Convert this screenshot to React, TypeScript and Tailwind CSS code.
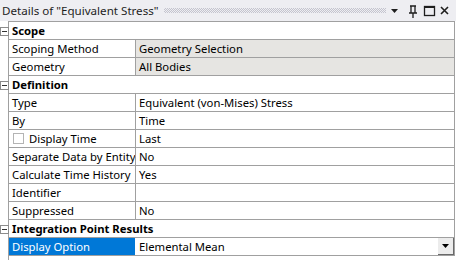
type Row =
  | { kind: "head"; label: string }
  | { kind: "item"; label: string; value: string; gray?: boolean; check?: boolean; selected?: boolean };

const rows: Row[] = [
  { kind: "head", label: "Scope" },
  { kind: "item", label: "Scoping Method", value: "Geometry Selection", gray: true },
  { kind: "item", label: "Geometry", value: "All Bodies", gray: true },
  { kind: "head", label: "Definition" },
  { kind: "item", label: "Type", value: "Equivalent (von-Mises) Stress" },
  { kind: "item", label: "By", value: "Time" },
  { kind: "item", label: "Display Time", value: "Last", check: true },
  { kind: "item", label: "Separate Data by Entity", value: "No" },
  { kind: "item", label: "Calculate Time History", value: "Yes" },
  { kind: "item", label: "Identifier", value: "" },
  { kind: "item", label: "Suppressed", value: "No" },
  { kind: "head", label: "Integration Point Results" },
  { kind: "item", label: "Display Option", value: "Elemental Mean", selected: true },
];

function Minus() {
  return (
    <div className="absolute left-0 top-[5px] flex h-[9px] w-[9px] items-center justify-center border border-[#8c8c8c] bg-white">
      <div className="h-px w-[5px] bg-[#333]" />
    </div>
  );
}

export default function App() {
  return (
    <div
      className="h-[260px] w-[456px] overflow-hidden bg-white text-[11.3px] leading-[17px] text-black"
      style={{ fontFamily: '"Noto Sans", sans-serif' }}
    >
      <div className="flex h-[21px] items-center bg-[#eeeef2] pl-[2px] pr-[6px] text-[11.6px] text-[#1e1e1e]">
        <span className="whitespace-nowrap">Details of "Equivalent Stress"</span>
        <div className="ml-[5px] mr-[4px] h-[5px] flex-1 bg-[conic-gradient(#c4c4ce_25%,transparent_0_50%,#c4c4ce_0_75%,transparent_0)] bg-[length:2px_2px]" />
        <svg width="60" height="14" viewBox="0 0 60 14" className="shrink-0">
          <path d="M1 5h7l-3.5 4z" fill="#1e1e1e" />
          <path d="M20 2h6M21 2v7M25 2v7M19 9h8M23 9v5" stroke="#1e1e1e" strokeWidth="1.3" fill="none" />
          <rect x="34.5" y="2.5" width="10" height="9" stroke="#1e1e1e" strokeWidth="1.3" fill="none" />
          <rect x="34.5" y="2.5" width="10" height="1.5" fill="#1e1e1e" />
          <path d="M51 3l7 7M58 3l-7 7" stroke="#1e1e1e" strokeWidth="1.6" />
        </svg>
      </div>
      <div className="relative">
        <div className="absolute left-[8px] top-0 h-[240px] w-px bg-[#a0a0a0]" />
        <div className="ml-[8px] mr-[1px] border-t border-r border-[#a0a0a0]">
          {rows.map((r, i) => {
            if (r.kind === "head") {
              return (
                <div key={i} className="relative -ml-[8px]">
                  <Minus />
                  <div className="ml-[8px] flex h-[18px] items-center border-b border-[#a0a0a0] pl-[4px] font-bold">
                    {r.label}
                  </div>
                </div>
              );
            }
            return (
              <div key={i} className="flex h-[18px] border-b border-[#a0a0a0]">
                <div
                  className={
                    r.selected
                      ? "flex w-[127px] items-center bg-[#0078d7] pl-[4px] text-white"
                      : "flex w-[127px] items-center pl-[4px]"
                  }
                >
                  {r.check ? <div className="mr-[5px] ml-[1px] h-[11px] w-[11px] border border-[#b4b4b4] bg-white" /> : null}
                  <span className="whitespace-nowrap">{r.label}</span>
                </div>
                <div
                  className={
                    r.gray
                      ? "flex flex-1 items-center border-l border-[#a0a0a0] bg-[#e6e5e2] pl-[3px]"
                      : r.selected
                        ? "flex flex-1 items-center pl-[4px]"
                        : "flex flex-1 items-center border-l border-[#a0a0a0] pl-[3px]"
                  }
                >
                  <span className="flex-1 whitespace-nowrap">{r.value}</span>
                  {r.selected ? (
                    <div className="flex h-[17px] w-[16px] items-center justify-center border-r border-b border-[#696969] bg-[#ececec]">
                      <svg width="7" height="4" viewBox="0 0 7 4">
                        <path d="M0 0h7l-3.5 4z" fill="#000" />
                      </svg>
                    </div>
                  ) : null}
                </div>
              </div>
            );
          })}
        </div>
      </div>
    </div>
  );
}
